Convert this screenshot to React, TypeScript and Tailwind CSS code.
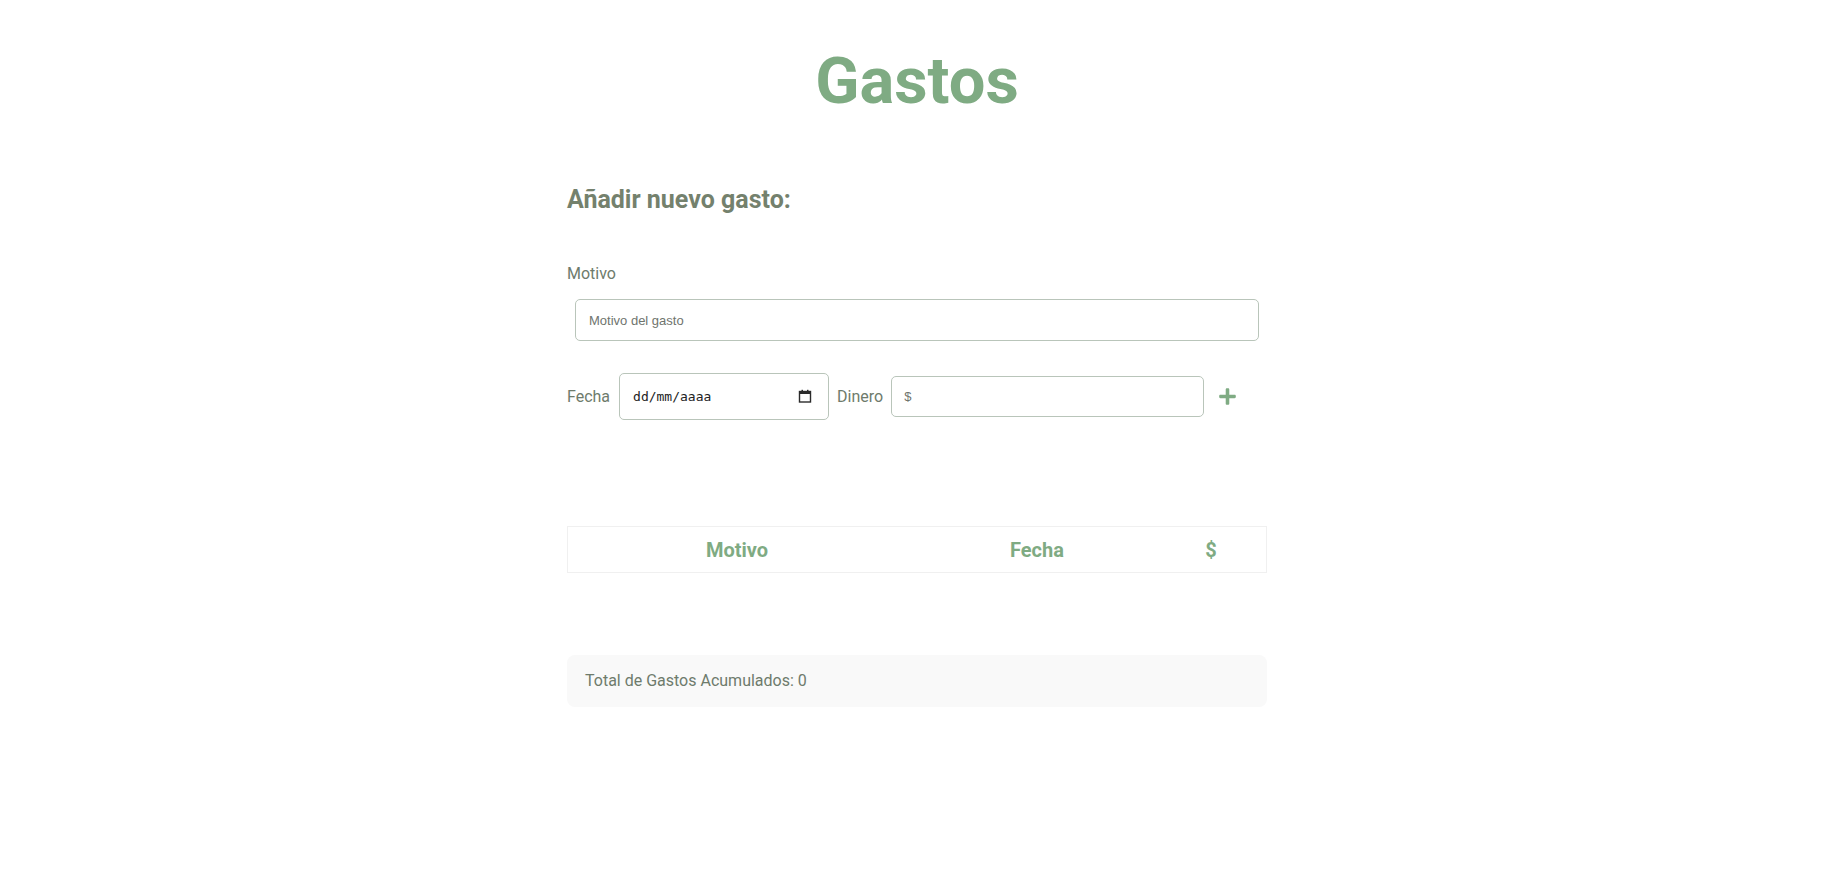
import { FaPlus } from "react-icons/fa";

function CalendarIcon() {
  return (
    <svg width="14" height="14" viewBox="0 0 14 14" className="text-[#2b2b2b]">
      <rect x="1.5" y="2.5" width="11" height="10.5" fill="none" stroke="currentColor" strokeWidth="1.4" />
      <rect x="1.5" y="2.5" width="11" height="2.5" fill="currentColor" />
      <rect x="3.5" y="0.8" width="1.5" height="2.5" fill="currentColor" />
      <rect x="9" y="0.8" width="1.5" height="2.5" fill="currentColor" />
    </svg>
  );
}

export default function App() {
  return (
    <div className="min-h-screen bg-white pl-[13px] font-['Roboto',sans-serif]">
      <div className="mx-auto w-[700px] pt-[49px]">
        {/* Title */}
        <h1 className="text-center text-[65px] leading-[65px] font-bold text-[#7fab83]">
          Gastos
        </h1>

        {/* Form */}
        <h2 className="mt-[70px] text-[25px] leading-8 font-bold text-[#74816d]">
          Añadir nuevo gasto:
        </h2>

        <label className="mt-[46px] block text-base leading-6 text-[#6e7b6c]">
          Motivo
        </label>
        <div className="mt-[13px] px-2">
          <input
            type="text"
            placeholder="Motivo del gasto"
            className="h-[42px] w-full rounded-[5px] border border-[#b9c5ba] px-[13px] font-['Liberation_Sans',sans-serif] text-[13px] text-[#333] outline-none placeholder:text-[#6f746e]"
          />
        </div>

        <div className="mt-8 flex items-center">
          <span className="text-base text-[#6e7b6c]">Fecha</span>
          <div className="relative ml-[9px] h-[47px] w-[210px]">
            <input
              type="text"
              placeholder="dd/mm/aaaa"
              className="h-full w-full rounded-[5px] border border-[#b9c5ba] pl-[13px] font-['DejaVu_Sans_Mono',monospace] text-[13px] text-[#222] outline-none placeholder:text-[#222]"
            />
            <span className="pointer-events-none absolute right-[17px] top-[16px]">
              <CalendarIcon />
            </span>
          </div>
          <span className="ml-2 text-base text-[#6e7b6c]">Dinero</span>
          <input
            type="text"
            placeholder="$"
            className="ml-[8px] h-[41px] w-[313px] rounded-[5px] border border-[#b9c5ba] px-[12px] font-['Liberation_Sans',sans-serif] text-[13px] text-[#333] outline-none placeholder:text-[#6f746e]"
          />
          <button className="ml-[14px] text-[#7fab83]">
            <FaPlus size={19} />
          </button>
        </div>

        {/* Table */}
        <div className="mt-[106px] flex h-[47px] items-center border border-[#f0f0f0] text-[20px] font-bold text-[#7fab83]">
          <div className="w-[338px] text-center">Motivo</div>
          <div className="w-[262px] text-center">Fecha</div>
          <div className="w-[86px] text-center">$</div>
        </div>

        {/* Total */}
        <div className="mt-[82px] flex h-[52px] items-center rounded-lg bg-[#f9f9f9] px-[18px] text-base text-[#6e7b6c]">
          Total de Gastos Acumulados: 0
        </div>
      </div>
    </div>
  );
}
